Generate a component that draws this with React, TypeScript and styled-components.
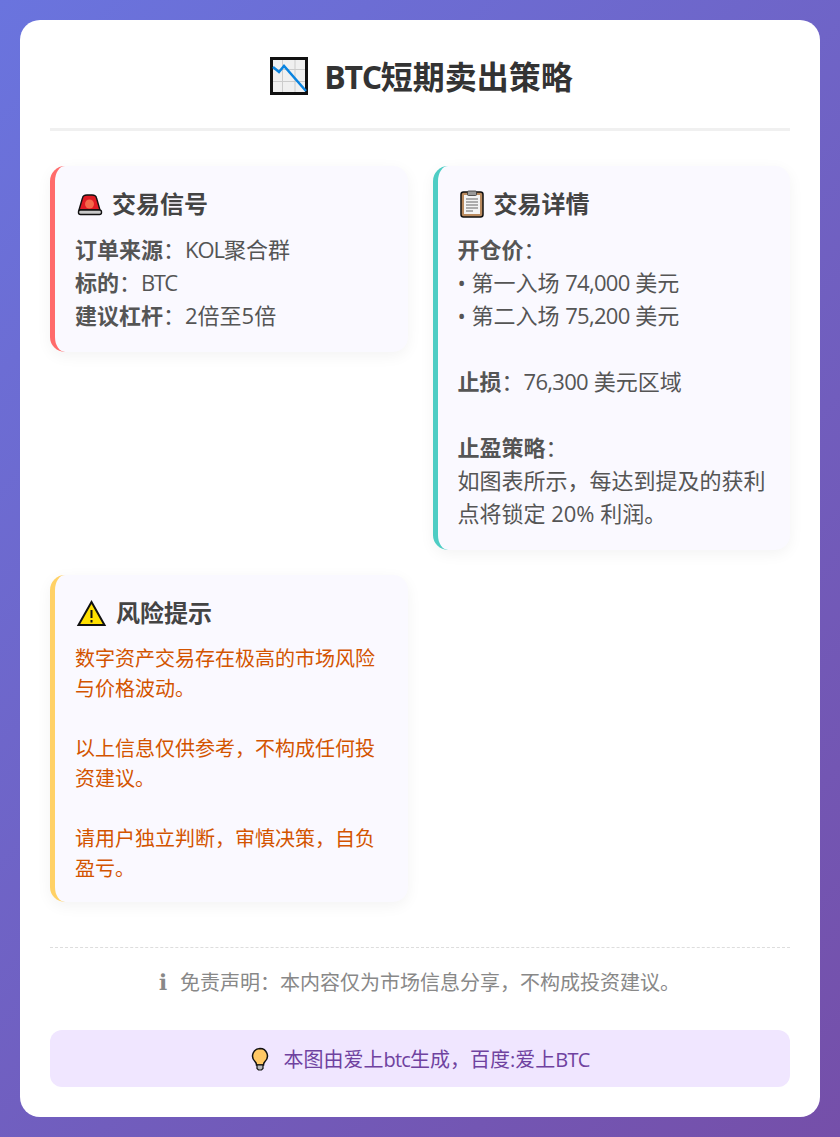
import styled, { createGlobalStyle } from "styled-components";

const Global = createGlobalStyle`
  * { box-sizing: border-box; }
  html, body { margin: 0; padding: 0; }
  body {
    font-family: "Open Sans", "Noto Sans CJK SC", sans-serif;
    background: linear-gradient(135deg, #6a74de 0%, #754fa9 100%);
    min-height: 1137px;
  }
`;

const Page = styled.div`
  padding: 20px;
`;

const Card = styled.div`
  background: #fff;
  border-radius: 20px;
  padding: 30px;
  height: 1097px;
  display: flex;
  flex-direction: column;
`;

const Title = styled.h1`
  margin: 0 0 35px;
  height: 81px;
  padding-left: 3px;
  border-bottom: 3px solid #f0f0f0;
  display: flex;
  justify-content: center;
  align-items: flex-start;
  gap: 16px;
  font-size: 32px;
  line-height: 54px;
  font-weight: 700;
  color: #333;
  svg { margin-top: 7px; }
`;

const Latin = styled.span<{ $tight: number }>`
  letter-spacing: ${(p) => p.$tight}px;
`;

const Grid = styled.div`
  display: grid;
  grid-template-columns: 1fr 1fr;
  gap: 25px;
  align-items: start;
`;

const Section = styled.section<{ $accent: string }>`
  background: #faf9ff;
  border-left: 5px solid ${(p) => p.$accent};
  border-radius: 15px;
  padding: 20px;
  box-shadow: 0 4px 15px rgba(0, 0, 0, 0.05);
`;

const Heading = styled.h2`
  margin: 0 0 11px;
  font-size: 24px;
  line-height: 36px;
  font-weight: 700;
  color: #444;
  display: flex;
  align-items: center;
  gap: 8px;
`;

const Body = styled.div`
  font-size: 22px;
  line-height: 33px;
  color: #555;
  b { font-weight: 700; }
`;

const Risk = styled.div`
  padding-top: 2px;
  margin-bottom: -2px;
  font-size: 20px;
  line-height: 30px;
  color: #d35400;
`;

const Disclaimer = styled.div`
  margin-top: 45px;
  border-top: 1px dashed #ddd;
  padding-top: 20px;
  display: flex;
  justify-content: center;
  align-items: center;
  gap: 14px;
  font-size: 20px;
  line-height: 30px;
  color: #888;
`;

const InfoGlyph = styled.span`
  width: 6px;
  display: flex;
  justify-content: center;
  font-family: "DejaVu Sans", sans-serif;
  font-weight: 700;
  font-size: 22px;
`;

const Promo = styled.div`
  margin-top: 32px;
  height: 57px;
  border-radius: 12px;
  background: #f0e6ff;
  color: #6f42a0;
  display: flex;
  justify-content: center;
  align-items: center;
  gap: 15px;
  font-size: 20px;
`;

const Chart = () => (
  <svg width="38" height="38" viewBox="0 0 38 38">
    <rect x="1.500" y="1.500" width="35" height="35" fill="#f0f0f0" stroke="#111" strokeWidth="3" />
    <path d="M3 12.500h32M3 24.500h32M12.500 3v32M25 3v32" stroke="#ccc" strokeWidth="1" />
    <path d="M3 10l6 5 5-6 22 25" fill="none" stroke="#0a84e0" strokeWidth="2.500" />
  </svg>
);

const Siren = () => (
  <svg width="29" height="28" viewBox="0 0 29 28">
    <path d="M4 20L7.500 8C8 5.500 10 5 12 5h5c2 0 4 .5 4.500 3L25 20z" fill="#e01b24" stroke="#111" strokeWidth="1.400" />
    <circle cx="14.500" cy="14" r="4.500" fill="#f4694a" />
    <rect x="3.500" y="20" width="23" height="4.500" rx="2" fill="#c9c9c9" stroke="#111" strokeWidth="1.400" />
  </svg>
);

const Clipboard = () => (
  <svg width="28" height="28" viewBox="0 0 28 28">
    <rect x="3" y="2" width="22" height="25" rx="2.500" fill="#b98a5e" stroke="#111" strokeWidth="1.500" />
    <rect x="6" y="5" width="16" height="19" fill="#f4f4f4" />
    <rect x="9.500" y="1" width="9" height="4.500" rx="1" fill="#999" stroke="#333" strokeWidth=".8" />
    <path d="M8 9h12M8 12h12M8 15h12M8 18h12M8 21h7" stroke="#666" strokeWidth="1" />
  </svg>
);

const Warning = () => (
  <svg width="33" height="28" viewBox="0 0 33 28">
    <path d="M16.500 3L29.500 26H3.500z" fill="#ffe000" stroke="#111" strokeWidth="2" />
    <path d="M16.500 11v8M16.500 21v2.500" stroke="#111" strokeWidth="2" />
  </svg>
);

const Bulb = () => (
  <svg width="18" height="24" viewBox="0 0 18 24">
    <path d="M9 1.500a7.500 7.500 0 0 0-5 13c1 1 1.500 2.500 1.500 3.500h7c0-1 .5-2.500 1.500-3.500a7.500 7.500 0 0 0-5-13z" fill="#ffc864" stroke="#111" strokeWidth="1.500" />
    <path d="M6 18h6v3.500l-1.500 1.500h-3L6 21.500z" fill="#bbb" stroke="#111" strokeWidth="1.200" />
  </svg>
);

export default function App() {
  return (
    <>
      <Global />
      <Page>
        <Card>
          <Title>
            <Chart />
            <span><Latin $tight={-1.3}>BTC</Latin>短期卖出策略</span>
          </Title>
          <Grid>
            <Section $accent="#ff6b6b">
              <Heading><Siren />交易信号</Heading>
              <Body>
                <b>订单来源</b>：<Latin $tight={-1}>KOL</Latin>聚合群<br />
                <b>标的</b>：<Latin $tight={-1.600}>BTC</Latin><br />
                <b>建议杠杆</b>：2倍至5倍
              </Body>
            </Section>
            <Section $accent="#4ecdc4">
              <Heading><Clipboard />交易详情</Heading>
              <Body>
                <b>开仓价</b>：<br />
                • 第一入场 <Latin $tight={-0.7}>74,000</Latin> 美元<br />
                • 第二入场 <Latin $tight={-0.7}>75,200</Latin> 美元<br /><br />
                <b>止损</b>：<Latin $tight={-0.7}>76,300</Latin> 美元区域<br /><br />
                <b>止盈策略</b>：<br />
                如图表所示，每达到提及的获利点将锁定 20% 利润。
              </Body>
            </Section>
            <Section $accent="#ffd166">
              <Heading><Warning />风险提示</Heading>
              <Risk>
                数字资产交易存在极高的市场风险与价格波动。<br /><br />
                以上信息仅供参考，不构成任何投资建议。<br /><br />
                请用户独立判断，审慎决策，自负盈亏。
              </Risk>
            </Section>
          </Grid>
          <Disclaimer>
            <InfoGlyph>ℹ</InfoGlyph>
            <span>免责声明：本内容仅为市场信息分享，不构成投资建议。</span>
          </Disclaimer>
          <Promo>
            <Bulb />
            <span>本图由爱上<Latin $tight={-0.8}>btc</Latin>生成，百度:爱上<Latin $tight={-0.8}>BTC</Latin></span>
          </Promo>
        </Card>
      </Page>
    </>
  );
}
